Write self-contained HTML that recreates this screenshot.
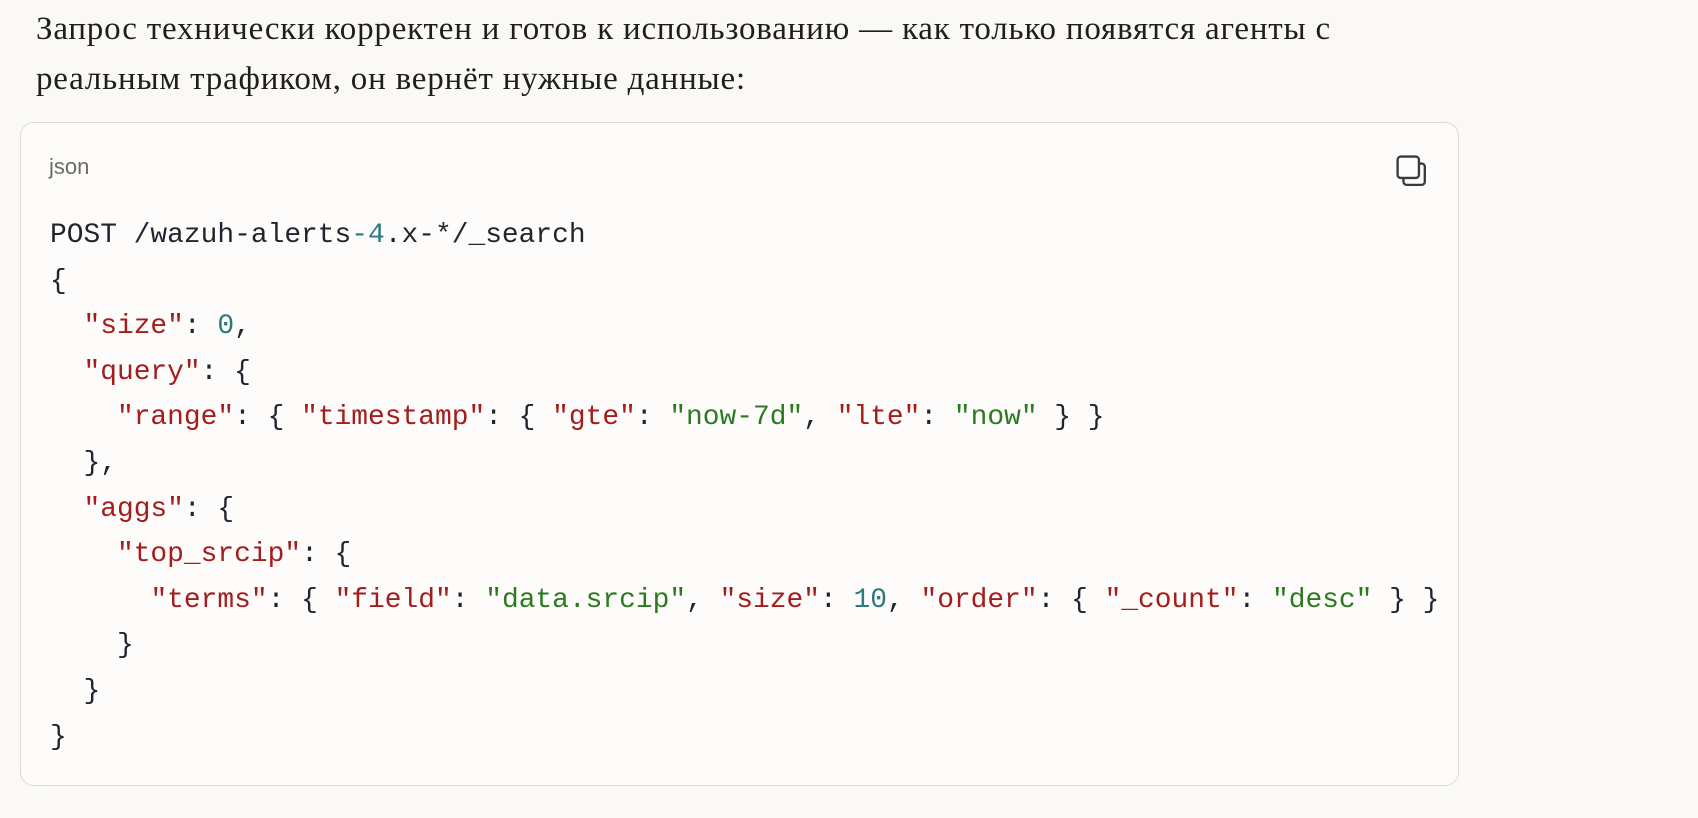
<!DOCTYPE html>
<html><head><meta charset="utf-8"><style>
body{margin:0;background:#faf9f6;width:1698px;height:818px;overflow:hidden;}
.p{position:absolute;left:36px;top:4px;font-family:"Liberation Serif",serif;font-size:33px;line-height:50px;color:#1f1e1b;width:1500px;letter-spacing:0.8px;white-space:nowrap}
.card{position:absolute;left:20px;top:122px;width:1439px;height:664px;box-sizing:border-box;border:1px solid #dddbd4;border-radius:14px;background:#fdfcfa}
.lang{position:absolute;left:28px;top:31px;font-family:"Liberation Sans",sans-serif;font-size:22px;color:#6b6a66}
pre{position:absolute;left:29px;top:90px;margin:0;font-family:"Liberation Mono",monospace;font-size:27.9px;line-height:45.6px;color:#1f2430}
.k{color:#a31d1d}.s{color:#2c7a20}.n{color:#2c7a80}
svg{position:absolute;left:1375px;top:32px}
</style></head><body>
<div class="p">Запрос технически корректен и готов к использованию — как только появятся агенты с<br>реальным трафиком, он вернёт нужные данные:</div>
<div class="card">
<div class="lang">json</div>
<svg width="32" height="32" viewBox="0 0 30 30" fill="none" stroke="#3a3a3a" stroke-width="2.2"><rect x="1.5" y="1.5" width="20" height="20" rx="3"/><path d="M7 21.5v3.5a3 3 0 0 0 3 3h14a3 3 0 0 0 3-3V11a3 3 0 0 0-3-3h-2.5"/></svg>
<pre>POST /wazuh-alerts<span class="n">-4</span>.x-*/_search
{
  <span class="k">"size"</span>: <span class="n">0</span>,
  <span class="k">"query"</span>: {
    <span class="k">"range"</span>: { <span class="k">"timestamp"</span>: { <span class="k">"gte"</span>: <span class="s">"now-7d"</span>, <span class="k">"lte"</span>: <span class="s">"now"</span> } }
  },
  <span class="k">"aggs"</span>: {
    <span class="k">"top_srcip"</span>: {
      <span class="k">"terms"</span>: { <span class="k">"field"</span>: <span class="s">"data.srcip"</span>, <span class="k">"size"</span>: <span class="n">10</span>, <span class="k">"order"</span>: { <span class="k">"_count"</span>: <span class="s">"desc"</span> } }
    }
  }
}</pre>
</div>
</body></html>
